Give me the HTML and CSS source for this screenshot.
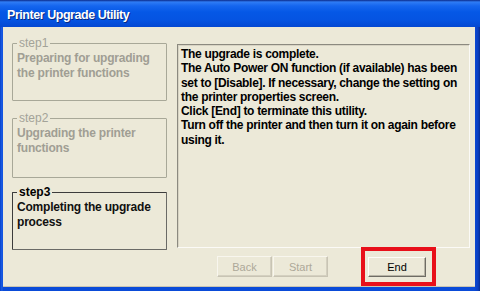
FILE: index.html
```html
<!DOCTYPE html>
<html>
<head>
<meta charset="utf-8">
<link rel="stylesheet" href="styles.css">
</head>
<body>
<div class="window">
  <div class="titlebar"><span class="title">Printer Upgrade Utility</span></div>
  <div class="client">
    <div class="main">
      <div class="steps">
        <fieldset class="step step1 disabled">
          <legend>step1</legend>
          <p>Preparing for upgrading the printer functions</p>
        </fieldset>
        <fieldset class="step step2 disabled">
          <legend>step2</legend>
          <p>Upgrading the printer functions</p>
        </fieldset>
        <fieldset class="step step3 active">
          <legend>step3</legend>
          <p>Completing the upgrade process</p>
        </fieldset>
      </div>
      <div class="message">
        <p>The upgrade is complete.<br>
        The Auto Power ON function (if available) has been set to [Disable]. If necessary, change the setting on the printer properties screen.<br>
        Click [End] to terminate this utility.<br>
        Turn off the printer and then turn it on again before using it.</p>
      </div>
    </div>
    <div class="buttons">
      <div class="pair">
        <button class="btn" disabled>Back</button>
        <button class="btn" disabled>Start</button>
      </div>
      <div class="highlight">
        <button class="btn end">End</button>
      </div>
    </div>
  </div>
</div>
</body>
</html>
```

FILE: styles.css
```css
html, body {
  margin: 0;
  padding: 0;
  background: #000;
}
.window {
  width: 480px;
  height: 291px;
  box-sizing: border-box;
  display: flex;
  flex-direction: column;
  background: linear-gradient(90deg, #0842c8 0, #1c5fe8 2px, #0a4bd8 3px, #0a4bd8 474px, #0a3fc0 478px, #062c90 480px);
  font-family: "Liberation Sans", Arial, sans-serif;
}
.titlebar {
  height: 27px;
  flex: none;
  display: flex;
  align-items: center;
  padding-left: 7px;
  background: linear-gradient(180deg, #0a2a8a 0, #2f7cf5 2px, #1565ee 6px, #0558e6 12px, #0554e2 20px, #0448d2 27px);
}
.title {
  color: #fff;
  font-family: "Liberation Sans", Arial, sans-serif;
  font-weight: bold;
  font-size: 12.5px;
  letter-spacing: -0.45px;
  text-shadow: 1px 1px 0 #0a2a80;
  padding-top: 2px;
}
.client {
  flex: 1;
  margin: 0 5px 6px 3px;
  background: #ece9d8;
  display: flex;
  flex-direction: column;
  border-bottom: 1px solid #c8c4b4;
}
.main {
  display: flex;
  padding: 10px 0 0 9px;
  gap: 10px;
}
.steps {
  width: 155px;
  display: flex;
  flex-direction: column;
}
.step {
  margin: 0;
  padding: 0 4px 0 4px;
  border: 1px solid #a8a898;
  border-radius: 1px;
  box-sizing: border-box;
}
.step legend {
  padding: 0 2px;
  font-size: 12px;
  line-height: 13px;
}
.step p {
  margin: 1px 0 0 0;
  font-size: 12px;
  font-weight: bold;
  letter-spacing: -0.2px;
  line-height: 14.5px;
}
.step1 { height: 64px; }
.step2 { height: 66px; margin-top: 11px; }
.step3 { height: 64px; margin-top: 8px; }
.disabled { color: #a3a398; }
.disabled p { color: #a09e94; }
.active {
  border-color: #3c3c3c;
  border-right-color: #6a6a66;
  border-bottom-color: #6a6a66;
}
.active legend { font-weight: bold; color: #000; }
.active p { color: #111; }
.message {
  width: 293px;
  height: 204px;
  margin-top: 7px;
  box-sizing: border-box;
  border: 1px solid #8c8a80;
  border-right-color: #fbfaf6;
  border-bottom-color: #fbfaf6;
  box-shadow: inset 1px 1px 0 #d8d4c4;
  padding: 2px 2px 0 3px;
}
.message p {
  margin: 0;
  font-size: 12px;
  font-weight: bold;
  letter-spacing: -0.3px;
  line-height: 14.3px;
  color: #000;
}
.buttons {
  display: flex;
  align-items: center;
  padding-left: 214px;
  margin-top: -3px;
}
.pair {
  display: flex;
  gap: 1px;
}
.btn {
  font-family: "Liberation Sans", Arial, sans-serif;
  font-size: 11px;
  height: 21px;
  padding: 0;
  background: #ece9d8;
  border: 1px solid #fff;
  border-right-color: #9a988c;
  border-bottom-color: #9a988c;
  box-shadow: inset -1px -1px 0 #d4d0c0;
  color: #000;
}
.btn:disabled {
  color: #aca899;
  border-color: #f8f6ee #c8c4b4 #c8c4b4 #f8f6ee;
}
.pair .btn { width: 55px; }
.highlight {
  margin-left: 33px;
  border: 4px solid #e8101a;
  padding: 6px 6px 5px 3px;
}
.btn.end {
  width: 58px;
  height: 20px;
  border-color: #fdfdf8 #6e6c64 #6e6c64 #fdfdf8;
  box-shadow: inset -1px -1px 0 #b8b4a6;
}
```
